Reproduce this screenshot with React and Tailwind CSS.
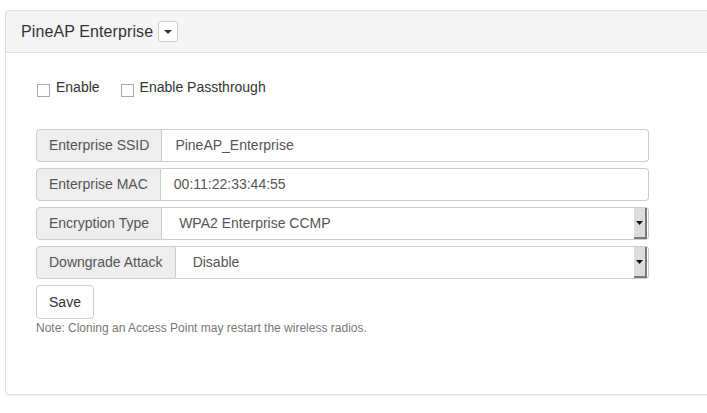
const rows = [
  { label: 'Enterprise SSID', value: 'PineAP_Enterprise' },
  { label: 'Enterprise MAC', value: '00:11:22:33:44:55' },
  { label: 'Encryption Type', value: 'WPA2 Enterprise CCMP', select: true },
  { label: 'Downgrade Attack', value: 'Disable', select: true },
]

function Check({ label }) {
  return (
    <label className="flex items-center gap-[6px]">
      <span className="mt-[6px] h-[13px] w-[13px] border border-[#a9a9a9] bg-[#fdfdfd]" />
      <span>{label}</span>
    </label>
  )
}

function Row({ label, value, select }) {
  return (
    <div className="flex h-[33px] w-[613px] text-[14px] text-[#555]">
      <div className="flex items-center whitespace-nowrap rounded-l-[4px] border border-[#ccc] bg-[#eee] px-[12px]">
        {label}
      </div>
      <div className="flex flex-1 items-center rounded-r-[4px] border border-l-0 border-[#ccc] bg-white">
        <span className={select ? 'flex-1 pl-[17px]' : 'flex-1 pl-[13px]'}>{value}</span>
        {select && (
          <span className="mr-px flex h-[31px] w-[13px] items-center justify-center border-r-2 border-b-2 border-[#7a7a7a] bg-[#dcdcdc]">
            <svg width="7" height="4" viewBox="0 0 7 4">
              <path d="M0 0h7L3.5 4z" fill="#111" />
            </svg>
          </span>
        )}
      </div>
    </div>
  )
}

export default function App() {
  return (
    <div className="h-[413px] w-[707px] overflow-hidden bg-white pl-[5px] pt-[10px] font-['Liberation_Sans',Arial,sans-serif] text-[#333]">
      <div className="h-[385px] w-[730px] rounded-[4px] border border-[#ddd] shadow-[0_1px_1px_rgba(0,0,0,0.05)]">
        <div className="flex h-[42px] items-center rounded-t-[4px] border-b border-[#ddd] bg-[#f5f5f5] px-[15px]">
          <span className="text-[16px] tracking-[0.1px]">PineAP Enterprise</span>
          <button className="ml-[5px] flex h-[21px] w-[20px] items-center justify-center rounded-[3px] border border-[#ccc] bg-white">
            <svg width="8" height="4" viewBox="0 0 8 4">
              <path d="M0 0h8L4 4z" fill="#333" />
            </svg>
          </button>
        </div>
        <div className="pl-[30px]">
          <div className="mt-[24px] flex gap-[21px] pl-[1px] text-[14px]">
            <Check label="Enable" />
            <Check label="Enable Passthrough" />
          </div>
          <div className="mt-[31px] flex flex-col gap-[6px]">
            {rows.map((r) => (
              <Row key={r.label} {...r} />
            ))}
          </div>
          <button className="mt-[6px] h-[34px] w-[58px] rounded-[4px] border border-[#ccc] bg-white text-[14px] text-[#333]">
            Save
          </button>
          <p className="mt-0 text-[12px] text-[#777]">Note: Cloning an Access Point may restart the wireless radios.</p>
        </div>
      </div>
    </div>
  )
}
